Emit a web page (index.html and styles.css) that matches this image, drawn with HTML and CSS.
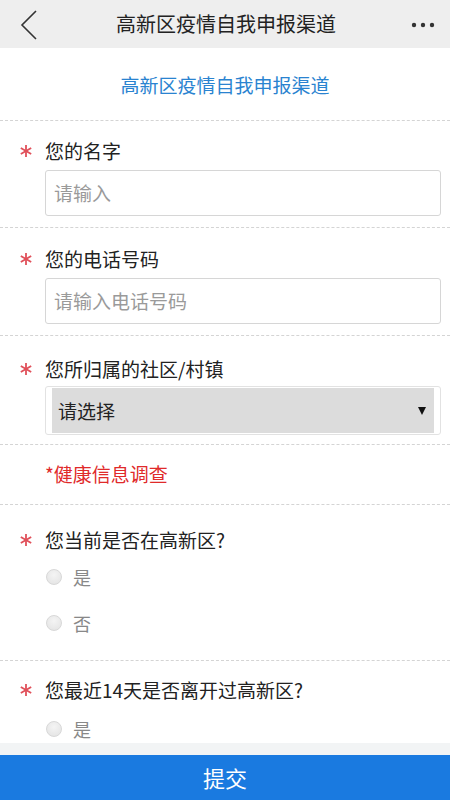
FILE: index.html
```html
<!DOCTYPE html>
<html lang="zh">
<head>
<meta charset="utf-8">
<link rel="stylesheet" href="styles.css">
</head>
<body>
<div class="nav">
  <svg class="back" width="20" height="32" viewBox="0 0 20 32"><polyline points="17,2 3,16 17,30" fill="none" stroke="#333" stroke-width="1.6"/></svg>
  <div class="nav-title">高新区疫情自我申报渠道</div>
  <svg class="more" width="26" height="8" viewBox="0 0 26 8"><circle cx="3" cy="4" r="2.2" fill="#333"/><circle cx="12" cy="4" r="2.2" fill="#333"/><circle cx="21" cy="4" r="2.2" fill="#333"/></svg>
</div>
<div class="header">高新区疫情自我申报渠道</div>
<div class="form">
  <div class="field f1">
    <div class="label"><span class="star"><svg width="12" height="12" viewBox="0 0 12 12"><g stroke="#e0505a" stroke-width="1.8"><line x1="6" y1="0" x2="6" y2="12"/><line x1="0.8" y1="3" x2="11.2" y2="9"/><line x1="0.8" y1="9" x2="11.2" y2="3"/></g></svg></span>您的名字</div>
    <div class="input placeholder">请输入</div>
  </div>
  <div class="field f2">
    <div class="label"><span class="star"><svg width="12" height="12" viewBox="0 0 12 12"><g stroke="#e0505a" stroke-width="1.8"><line x1="6" y1="0" x2="6" y2="12"/><line x1="0.8" y1="3" x2="11.2" y2="9"/><line x1="0.8" y1="9" x2="11.2" y2="3"/></g></svg></span>您的电话号码</div>
    <div class="input placeholder">请输入电话号码</div>
  </div>
  <div class="field f3">
    <div class="label"><span class="star"><svg width="12" height="12" viewBox="0 0 12 12"><g stroke="#e0505a" stroke-width="1.8"><line x1="6" y1="0" x2="6" y2="12"/><line x1="0.8" y1="3" x2="11.2" y2="9"/><line x1="0.8" y1="9" x2="11.2" y2="3"/></g></svg></span>您所归属的社区/村镇</div>
    <div class="select"><div class="select-inner"><span>请选择</span><span class="arrow"></span></div></div>
  </div>
  <div class="section-title">*健康信息调查</div>
  <div class="field q1">
    <div class="label"><span class="star"><svg width="12" height="12" viewBox="0 0 12 12"><g stroke="#e0505a" stroke-width="1.8"><line x1="6" y1="0" x2="6" y2="12"/><line x1="0.8" y1="3" x2="11.2" y2="9"/><line x1="0.8" y1="9" x2="11.2" y2="3"/></g></svg></span>您当前是否在高新区?</div>
    <div class="radios">
      <div class="radio"><span class="dot"></span>是</div>
      <div class="radio"><span class="dot"></span>否</div>
    </div>
  </div>
  <div class="field q2">
    <div class="label"><span class="star"><svg width="12" height="12" viewBox="0 0 12 12"><g stroke="#e0505a" stroke-width="1.8"><line x1="6" y1="0" x2="6" y2="12"/><line x1="0.8" y1="3" x2="11.2" y2="9"/><line x1="0.8" y1="9" x2="11.2" y2="3"/></g></svg></span>您最近14天是否离开过高新区?</div>
    <div class="radios">
      <div class="radio"><span class="dot"></span>是</div>
      <div class="radio"><span class="dot"></span>否</div>
    </div>
  </div>
</div>
<div class="footer">
  <div class="submit">提交</div>
</div>
</body>
</html>
```
FILE: styles.css
```css
* { box-sizing: border-box; }
html, body { margin: 0; padding: 0; }
body {
  font-family: "Noto Sans CJK SC", "Noto Sans", sans-serif;
  color: #222;
  background: #fff;
  width: 450px;
  height: 800px;
  overflow: hidden;
}
.nav {
  height: 48px;
  background: #eeeeee;
  display: flex;
  align-items: center;
  justify-content: space-between;
  padding: 0 13px 0 19px;
}
.back { display: block; margin-top: 1px; }
.more { display: block; margin-top: 2px; }
.nav-title {
  font-size: 20px;
  line-height: 48px;
  color: #222;
  padding-left: 2px;
}
.header {
  height: 73px;
  line-height: 73px;
  text-align: center;
  font-size: 19px;
  color: #2a83d0;
  border-bottom: 1px dashed #d4d4d4;
}
.field {
  padding: 18px 9px 11px 45px;
  border-bottom: 1px dashed #d4d4d4;
}
.label {
  position: relative;
  font-size: 19px;
  line-height: 24px;
  color: #222;
  margin-bottom: 7px;
}
.star {
  position: absolute;
  left: -25px;
  top: 6px;
  width: 12px;
  height: 12px;
}
.star svg { display: block; }
.input {
  height: 46px;
  border: 1px solid #d6d6d6;
  border-radius: 3px;
  padding: 0 8px;
  line-height: 44px;
  font-size: 19px;
}
.placeholder { color: #9a9a9a; }
.f2 { padding-top: 19px; }
.f3 { padding-top: 21px; padding-bottom: 9px; }
.f3 .label { margin-bottom: 5px; }
.select {
  height: 49px;
  border: 1px solid #e2e2e2;
  border-radius: 3px;
  padding: 1px 6px;
}
.select-inner {
  height: 100%;
  background: #dcdcdc;
  display: flex;
  align-items: center;
  justify-content: space-between;
  padding: 0 8px 0 6px;
  font-size: 19px;
  color: #222;
}
.arrow {
  width: 0;
  height: 0;
  border-left: 4px solid transparent;
  border-right: 4px solid transparent;
  border-top: 8px solid #111;
  margin-top: 1px;
}
.section-title {
  height: 60px;
  line-height: 58px;
  padding-left: 45px;
  font-size: 19px;
  color: #e02a2a;
  border-bottom: 1px dashed #d4d4d4;
}
.q1 { padding-top: 23px; padding-bottom: 14px; }
.q2 { padding-top: 17px; }
.radios { display: flex; flex-direction: column; }
.radio {
  height: 46px;
  display: flex;
  align-items: center;
  font-size: 18px;
  color: #888;
  padding-left: 1px;
}
.q1 .radios { margin-top: -5px; }
.q2 .radios { margin-top: -3px; }
.dot {
  width: 16px;
  height: 16px;
  border-radius: 50%;
  border: 1px solid #d8d8d8;
  background: radial-gradient(circle at 50% 35%, #f4f4f4 0%, #e2e2e2 100%);
  margin-right: 11px;
}
.footer {
  position: fixed;
  left: 0;
  right: 0;
  bottom: 0;
  height: 57px;
  padding-top: 12px;
  background: #f2f4f5;
}
.submit {
  height: 45px;
  background: #1a7ae0;
  color: #fff;
  text-align: center;
  font-size: 22px;
  line-height: 45px;
}
```
